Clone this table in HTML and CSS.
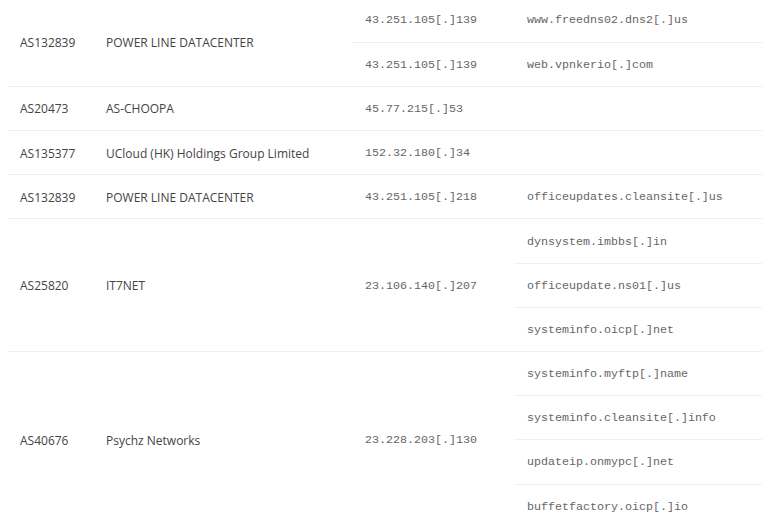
FILE: index.html
```html
<!DOCTYPE html>
<html>
<head>
<meta charset="utf-8">
<link rel="stylesheet" href="styles.css">
</head>
<body>
<table class="ioc">
  <colgroup>
    <col class="c-asn"><col class="c-name"><col class="c-ip"><col class="c-dom">
  </colgroup>
  <tbody>
    <tr>
      <td class="sans" rowspan="2">AS132839</td>
      <td class="sans" rowspan="2">POWER LINE DATACENTER</td>
      <td class="mono">43.251.105[.]139</td>
      <td class="mono">www.freedns02.dns2[.]us</td>
    </tr>
    <tr>
      <td class="mono">43.251.105[.]139</td>
      <td class="mono">web.vpnkerio[.]com</td>
    </tr>
    <tr>
      <td class="sans">AS20473</td>
      <td class="sans">AS-CHOOPA</td>
      <td class="mono">45.77.215[.]53</td>
      <td class="mono"></td>
    </tr>
    <tr>
      <td class="sans">AS135377</td>
      <td class="sans">UCloud (HK) Holdings Group Limited</td>
      <td class="mono">152.32.180[.]34</td>
      <td class="mono"></td>
    </tr>
    <tr>
      <td class="sans">AS132839</td>
      <td class="sans">POWER LINE DATACENTER</td>
      <td class="mono">43.251.105[.]218</td>
      <td class="mono">officeupdates.cleansite[.]us</td>
    </tr>
    <tr>
      <td class="sans" rowspan="3">AS25820</td>
      <td class="sans" rowspan="3">IT7NET</td>
      <td class="mono" rowspan="3">23.106.140[.]207</td>
      <td class="mono">dynsystem.imbbs[.]in</td>
    </tr>
    <tr>
      <td class="mono">officeupdate.ns01[.]us</td>
    </tr>
    <tr>
      <td class="mono">systeminfo.oicp[.]net</td>
    </tr>
    <tr>
      <td class="sans" rowspan="4">AS40676</td>
      <td class="sans" rowspan="4">Psychz Networks</td>
      <td class="mono" rowspan="4">23.228.203[.]130</td>
      <td class="mono">systeminfo.myftp[.]name</td>
    </tr>
    <tr>
      <td class="mono">systeminfo.cleansite[.]info</td>
    </tr>
    <tr>
      <td class="mono">updateip.onmypc[.]net</td>
    </tr>
    <tr>
      <td class="mono">buffetfactory.oicp[.]io</td>
    </tr>
  </tbody>
</table>
</body>
</html>
```

FILE: styles.css
```css
html, body {
  background: #ffffff;
}
body {
  margin: 8px;
  overflow: hidden;
}
.ioc {
  width: 756px;
  margin-top: -10px;
  border-collapse: collapse;
  table-layout: fixed;
}
.c-asn { width: 86px; }
.c-name { width: 258px; }
.c-ip { width: 162px; }
.c-dom { width: 250px; }
.ioc td {
  height: 44.2px;
  padding: 1px 12px 0;
  box-sizing: border-box;
  border-bottom: 1px solid #efefef;
  vertical-align: middle;
  white-space: nowrap;
}
.sans {
  font-family: "Open Sans", "Noto Sans", sans-serif;
  font-size: 12px;
  color: #444444;
}
.mono {
  font-family: "Liberation Mono", "Courier New", monospace;
  font-size: 11.67px;
  color: #666666;
  padding-left: 13px !important;
}
```
